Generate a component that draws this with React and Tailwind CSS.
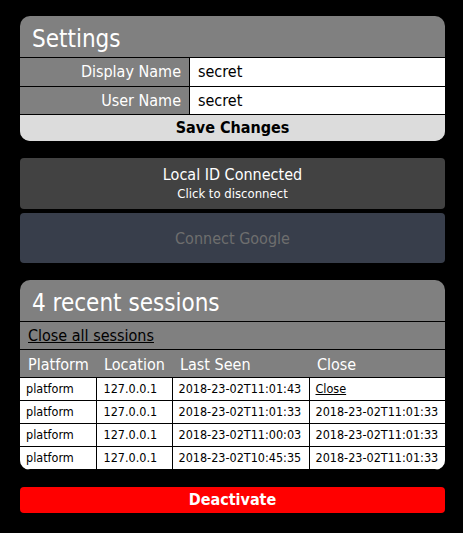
import React from 'react';

const sessions = [
  { platform: 'platform', location: '127.0.0.1', lastSeen: '2018-23-02T11:01:43', close: null },
  { platform: 'platform', location: '127.0.0.1', lastSeen: '2018-23-02T11:01:33', close: '2018-23-02T11:01:33' },
  { platform: 'platform', location: '127.0.0.1', lastSeen: '2018-23-02T11:00:03', close: '2018-23-02T11:01:33' },
  { platform: 'platform', location: '127.0.0.1', lastSeen: '2018-23-02T10:45:35', close: '2018-23-02T11:01:33' },
];

const App = () => {
  return (
    <div
      className="min-h-screen bg-black pt-4 pl-5"
      style={{ fontFamily: '"DejaVu Sans Condensed", "DejaVu Sans", sans-serif' }}
    >
      <div className="w-[425px]">
        {/* Settings */}
        <div className="rounded-[10px] overflow-hidden bg-[#808080]">
          <div className="h-[41px] flex items-center pl-3 pt-1 text-[24px] text-white">Settings</div>
          <div className="grid grid-cols-[169px_1fr] h-[29px] border-t border-black">
            <div className="flex items-center justify-end pr-2 text-[16px] text-white">Display Name</div>
            <div className="flex items-center pl-2 bg-white border-l border-black text-[16px] text-black">secret</div>
          </div>
          <div className="grid grid-cols-[169px_1fr] h-[28px] border-t border-black">
            <div className="flex items-center justify-end pr-2 text-[16px] text-white">User Name</div>
            <div className="flex items-center pl-2 bg-white border-l border-black text-[16px] text-black">secret</div>
          </div>
          <button className="w-full h-[27px] border-t border-black bg-[#dcdcdc] text-[16px] font-bold text-black">
            Save Changes
          </button>
        </div>

        {/* Connections */}
        <button className="mt-[17px] w-full h-[51px] rounded-[4px] bg-[#424242] text-white flex flex-col items-center justify-center gap-[1px] leading-tight">
          <span className="text-[16px]">Local ID Connected</span>
          <span className="text-[13px]">Click to disconnect</span>
        </button>
        <button className="mt-[4px] w-full h-[50px] rounded-[4px] bg-[#383e4b] text-[#6e6e6e] text-[16px] pt-[2px]">
          Connect Google
        </button>

        {/* Sessions */}
        <div className="mt-[17px] rounded-[10px] overflow-hidden bg-[#808080]">
          <div className="h-[41px] flex items-center pl-3 pt-1 text-[24px] text-white">4 recent sessions</div>
          <div className="h-[28px] flex items-center pl-2 pt-[1px] border-t border-black">
            <a className="text-[16px] text-black underline">Close all sessions</a>
          </div>
          <table className="w-full table-fixed border-collapse">
            <colgroup>
              <col className="w-[76px]" />
              <col className="w-[76px]" />
              <col className="w-[137px]" />
              <col />
            </colgroup>
            <thead>
              <tr className="h-[28px] border-t border-black text-left text-[16px] text-white font-normal">
                <th className="font-normal pl-2 pt-[2px]">Platform</th>
                <th className="font-normal pl-2 pt-[2px]">Location</th>
                <th className="font-normal pl-2 pt-[2px]">Last Seen</th>
                <th className="font-normal pl-2 pt-[2px]">Close</th>
              </tr>
            </thead>
            <tbody className="bg-white text-[12.5px] text-black">
              {sessions.map((s, i) => (
                <tr key={i} className="h-[23px]">
                  <td className="border border-black border-l-0 pl-[6px] whitespace-nowrap">{s.platform}</td>
                  <td className="border border-black pl-[7px] whitespace-nowrap">{s.location}</td>
                  <td className="border border-black pl-[6px] whitespace-nowrap">{s.lastSeen}</td>
                  <td className="border border-black border-r-0 pl-[6px] whitespace-nowrap">
                    {s.close ? s.close : <a className="underline">Close</a>}
                  </td>
                </tr>
              ))}
            </tbody>
          </table>
        </div>

        <button className="mt-[17px] w-full h-[26px] rounded-[4px] bg-[#ff0000] text-white text-[16px] font-bold">
          Deactivate
        </button>
      </div>
    </div>
  );
};

export default App;
